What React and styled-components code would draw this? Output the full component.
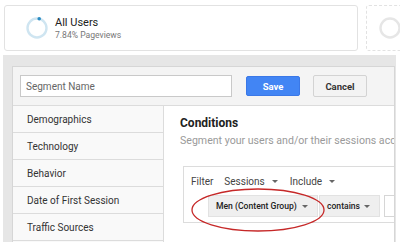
import React from 'react';
import styled, {createGlobalStyle} from "styled-components";

const Global = createGlobalStyle`
    body {
        margin: 0;
        background: #fff;
        font-family: Roboto, "Liberation Sans", sans-serif;
        overflow: hidden;
    }
`

const Page = styled.div`
    width: 400px;
    height: 242px;
    overflow: hidden;
`

const CardRow = styled.div`
    display: flex;
    gap: 8px;
    padding: 5px 0 0 4px;
    height: 46px;
`

const Card = styled.div`
    flex: 0 0 ${(props) => props.width}px;
    box-sizing: border-box;
    display: flex;
    align-items: center;
    gap: 6px;
    padding-left: ${(props) => props.inset || 20}px;
    border: 1px ${(props) => props.dashed ? "dashed" : "solid"} #e2e2e2;
    border-radius: 3px;
    background: #fff;
`

const CardText = styled.div`
    display: flex;
    flex-direction: column;

    & > b {
        font-weight: 400;
        font-size: 11px;
        color: #222;
    }
    & > span {
        font-size: 8.6px;
        color: #777;
        margin-top: 1px;
    }
`

const Backdrop = styled.div`
    margin: 4px 4px 0 3px;
    background: #e6e6e6;
    padding: 11px 1px 0 9px;
    height: 200px;
`

const Panel = styled.div`
    border: 1px solid #d6d6d6;
    background: #fff;
    height: 100%;
`

const Toolbar = styled.div`
    display: flex;
    align-items: center;
    height: 38px;
    padding: 0 0 0 7px;
    background: #f4f4f4;
    border-bottom: 1px solid #dcdcdc;
    overflow: hidden;
`

const NameInput = styled.div`
    box-sizing: border-box;
    flex: 0 0 212px;
    height: 22px;
    border: 1px solid #c9c9c9;
    background: #fff;
    font-size: 10px;
    color: #666;
    padding: 5px 0 0 5px;
    margin-right: 14px;
`

const Button = styled.div`
    box-sizing: border-box;
    flex: 0 0 ${(props) => props.width || 54}px;
    height: ${(props) => props.primary ? 20 : 22}px;
    display: flex;
    align-items: center;
    justify-content: center;
    font-size: 9.5px;
    font-weight: 700;
    border-radius: 2px;
    color: ${(props) => props.primary ? "#fff" : "#333"};
    background: ${(props) => props.primary ? "#4285f4" : "#f3f3f3"};
    border: 1px solid ${(props) => props.primary ? "#3b78e7" : "#d3d3d3"};
    margin-right: ${(props) => props.gap || 0}px;
`

const Body = styled.div`
    display: flex;
    height: 200px;
`

const Sidebar = styled.div`
    flex: 0 0 150px;
    background: #f9f9f9;
    border-right: 1px solid #dcdcdc;
`

const NavItem = styled.div`
    height: 26px;
    border-bottom: 1px solid #dcdcdc;
    display: flex;
    align-items: center;
    padding-left: 14px;
    font-size: 10px;
    color: #333;
`

const Content = styled.div`
    flex: 1;
    min-width: 0;
    padding: 10px 0 0 16px;
    position: relative;
    white-space: nowrap;
    overflow: hidden;
`

const Title = styled.div`
    font-size: 12px;
    font-weight: 700;
    color: #222;
`

const Subtitle = styled.div`
    font-size: 10.6px;
    color: #9a9a9a;
    margin-top: 4px;
`

const FilterBox = styled.div`
    margin: 19px 0 0 3px;
    height: 57px;
    box-sizing: border-box;
    border: 1px solid #dcdcdc;
    border-right: none;
    padding: 6px 0 0 7px;
`

const FilterRow = styled.div`
    display: flex;
    align-items: center;
    font-size: 10px;
    color: #444;
    height: 16px;
`

const Picker = styled.span`
    margin-left: ${(props) => props.offset}px;
    display: inline-flex;
    align-items: center;
`

const Caret = styled.span`
    display: inline-block;
    flex-shrink: 0;
    width: 0;
    height: 0;
    border-left: 3px solid transparent;
    border-right: 3px solid transparent;
    border-top: 3px solid #666;
    margin-left: ${(props) => props.space || 0}px;
`

const ConditionRow = styled.div`
    display: flex;
    margin: 6px 0 0 17px;
`

const Select = styled.div`
    box-sizing: border-box;
    width: ${(props) => props.width}px;
    flex-shrink: 0;
    height: 22px;
    display: flex;
    align-items: center;
    padding: 0 9px 0 7px;
    background: #efefef;
    border: 1px solid #e2e2e2;
    font-size: 8.6px;
    font-weight: 500;
    color: #222;
    margin-right: ${(props) => props.gap || 0}px;

    & > span:first-child {
        flex: 1;
    }
`

const ValueInput = styled.div`
    width: 30px;
    flex-shrink: 0;
    height: 22px;
    box-sizing: border-box;
    border: 1px solid #d6d6d6;
    border-right: none;
    background: #fff;
`

const Highlight = styled.svg`
    position: absolute;
    left: 26px;
    top: 81px;
    pointer-events: none;
`

function Spinner({size = 24, color = "#cfe5f1", dot}) {
    return (
        <svg width={size} height={size} viewBox="0 0 24 24">
            <circle cx="12" cy="12" r="9.5" fill="none" stroke={color} strokeWidth="2.4"/>
            {dot && <circle cx="14.2" cy="2.8" r="1.8" fill="#2a8bc2"/>}
        </svg>
    );
}

export default function App() {
    const nav = ["Demographics", "Technology", "Behavior", "Date of First Session", "Traffic Sources"];
    return (
        <Page>
            <Global/>
            <CardRow>
                <Card width={354}>
                    <Spinner dot/>
                    <CardText>
                        <b>All Users</b>
                        <span>7.84% Pageviews</span>
                    </CardText>
                </Card>
                <Card width={60} dashed inset={11}>
                    <Spinner color="#e6e6e6"/>
                </Card>
            </CardRow>

            <Backdrop>
                <Panel>
                    <Toolbar>
                        <NameInput>Segment Name</NameInput>
                        <Button primary gap={13}>Save</Button>
                        <Button gap={27}>Cancel</Button>
                        <Button/>
                    </Toolbar>
                    <Body>
                        <Sidebar>
                            {nav.map((item) => <NavItem key={item}>{item}</NavItem>)}
                        </Sidebar>
                        <Content>
                            <Title>Conditions</Title>
                            <Subtitle>Segment your users and/or their sessions according to single or multi-session conditions.</Subtitle>
                            <FilterBox>
                                <FilterRow>
                                    Filter
                                    <Picker offset={11}>Sessions<Caret space={7}/></Picker>
                                    <Picker offset={12}>Include<Caret space={7}/></Picker>
                                </FilterRow>
                                <ConditionRow>
                                    <Select width={110} gap={1}><span>Men (Content Group)</span><Caret/></Select>
                                    <Select width={61} gap={4}><span>contains</span><Caret/></Select>
                                    <ValueInput/>
                                </ConditionRow>
                            </FilterBox>
                            <Highlight width="136" height="46" viewBox="0 0 136 46">
                                <ellipse cx="68" cy="23" rx="66" ry="21" fill="none" stroke="#c62828" strokeWidth="1.3"/>
                            </Highlight>
                        </Content>
                    </Body>
                </Panel>
            </Backdrop>
        </Page>
    );
}
